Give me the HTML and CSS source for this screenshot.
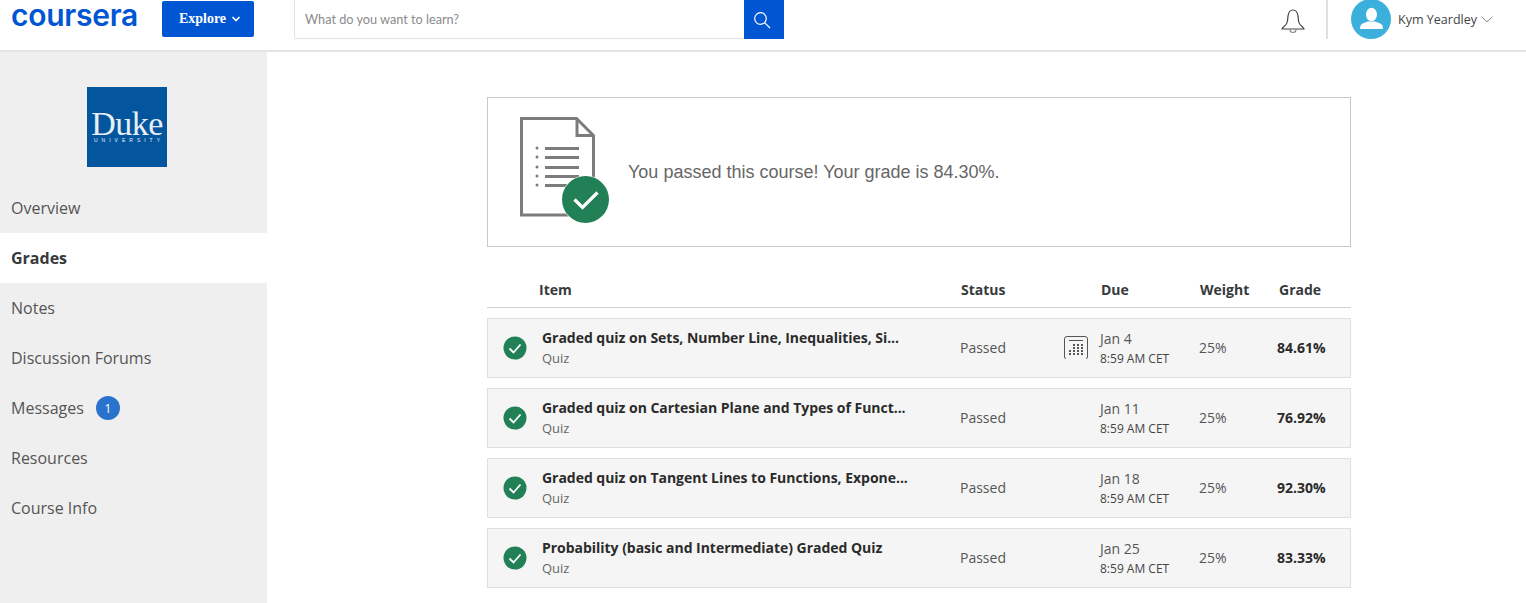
FILE: index.html
```html
<!DOCTYPE html>
<html lang="en">

<head>
	<meta charset="UTF-8">
	<meta name="viewport" content="width=device-width, initial-scale=1.0">
	<title>Grades | Coursera</title>
	<link rel="stylesheet" href="styles.css">
</head>

<body>

	<header class="topbar">
		<div class="topbar__logo">coursera</div>
		<button class="topbar__explore">Explore
			<svg width="10" height="6" viewBox="0 0 10 6"><path d="M1.500 1 5 4.500 8.500 1" fill="none" stroke="#fff" stroke-width="1.600"/></svg>
		</button>
		<div class="search">
			<div class="search__input">What do you want to learn?</div>
			<div class="search__btn">
				<svg width="18" height="18" viewBox="0 0 18 18"><circle cx="7.500" cy="7.500" r="5.800" fill="none" stroke="#fff" stroke-width="1.200"/><path d="M11.800 11.800 17 17" stroke="#fff" stroke-width="1.200"/></svg>
			</div>
		</div>
		<div class="topbar__right">
			<svg class="bell" width="24" height="26" viewBox="0 0 24 26"><path d="M1 20c0-2 5-3 5.500-8l.5-5C7.500 3.500 9 1 12 1s4.500 2.500 5 6l.5 5c.5 5 5.500 6 5.500 8z" fill="none" stroke="#444" stroke-width="1.200"/><path d="M9 20.500a3 3 0 0 0 6 0" fill="none" stroke="#888" stroke-width="1.200"/></svg>
			<div class="topbar__divider"></div>
			<div class="avatar">
				<svg width="40" height="40" viewBox="0 0 40 40"><circle cx="20" cy="20" r="20" fill="#3cb0dc"/><ellipse cx="20.500" cy="15.500" rx="5.500" ry="6.800" fill="#fff"/><path d="M9 30c0-3.500 1-5 4-6l4-1.500h7l4 1.500c3 1 4 2.500 4 6z" fill="#fff"/></svg>
			</div>
			<span class="topbar__name">Kym Yeardley</span>
			<svg width="12" height="7" viewBox="0 0 12 7"><path d="M.5.700 6 5.800 11.500.700" fill="none" stroke="#888" stroke-width="1"/></svg>
		</div>
	</header>

	<div class="page">
		<aside class="sidebar">
			<div class="duke">
				<div class="duke__name">Duke</div>
				<div class="duke__sub">UNIVERSITY</div>
			</div>
			<nav class="sidebar__nav">
				<a class="nav__item">Overview</a>
				<a class="nav__item nav__item--active">Grades</a>
				<a class="nav__item">Notes</a>
				<a class="nav__item">Discussion Forums</a>
				<a class="nav__item">Messages <span class="nav__badge">1</span></a>
				<a class="nav__item">Resources</a>
				<a class="nav__item">Course Info</a>
			</nav>
		</aside>

		<main class="content">
			<section class="passed">
				<svg class="passed__icon" width="92" height="108" viewBox="0 0 92 108">
					<path d="M1.500 1.500h55l17 17V98H1.500z" fill="#fff" stroke="#7c7c7c" stroke-width="3"/>
					<path d="M57 2v16.500h16" fill="none" stroke="#7c7c7c" stroke-width="3"/>
					<g fill="#7c7c7c">
						<rect x="25" y="30" width="34" height="3"/>
						<rect x="25" y="39" width="34" height="3"/>
						<rect x="25" y="49" width="34" height="3"/>
						<rect x="25" y="58" width="34" height="3"/>
						<rect x="25" y="67" width="34" height="3"/>
						<circle cx="17" cy="31" r="1.500"/>
						<circle cx="17" cy="40" r="1.500"/>
						<circle cx="17" cy="50" r="1.500"/>
						<circle cx="17" cy="59" r="1.500"/>
						<circle cx="17" cy="68" r="1.500"/>
					</g>
					<circle cx="65.500" cy="82.500" r="24" fill="#fff"/>
					<circle cx="65.500" cy="82.500" r="23.500" fill="#218055"/>
					<path d="M54.500 82.500l8 8 15-15" fill="none" stroke="#fff" stroke-width="3.200"/>
				</svg>
				<p class="passed__text">You passed this course! Your grade is 84.30%.</p>
			</section>

			<div class="grades__head">
				<span class="cell-item">Item</span>
				<span class="cell-status">Status</span>
				<span class="cell-due">Due</span>
				<span class="cell-weight">Weight</span>
				<span class="cell-grade">Grade</span>
			</div>

			<div class="grades__row">
				<svg class="check" width="24" height="24" viewBox="0 0 24 24"><circle cx="12" cy="12" r="11.500" fill="#218055"/><path d="M6.500 12.500l4 4 7-8" fill="none" stroke="#fff" stroke-width="1.800"/></svg>
				<div class="row__item">
					<div class="row__title">Graded quiz on Sets, Number Line, Inequalities, Si...</div>
					<div class="row__type">Quiz</div>
				</div>
				<div class="row__status">Passed</div>
				<div class="row__cal">
					<svg width="24" height="24" viewBox="0 0 24 24">
						<path d="M2 22.500a1.500 1.500 0 0 1-1.500-1.500V3A2.500 2.500 0 0 1 3 .5h18A2.500 2.500 0 0 1 23.500 3v18a1.500 1.500 0 0 1-1.500 1.500M5 4.500h14" fill="none" stroke="#555" stroke-width="1"/>
						<g fill="#555">
							<rect x="9" y="8" width="2" height="2"/><rect x="13" y="8" width="2" height="2"/><rect x="17" y="8" width="2" height="2"/>
							<rect x="9" y="11" width="2" height="2"/><rect x="13" y="11" width="2" height="2"/><rect x="17" y="11" width="2" height="2"/>
							<rect x="5" y="14" width="2" height="2"/><rect x="9" y="14" width="2" height="2"/><rect x="13" y="14" width="2" height="2"/><rect x="17" y="14" width="2" height="2"/>
							<rect x="5" y="17" width="2" height="2"/><rect x="9" y="17" width="2" height="2"/><rect x="13" y="17" width="2" height="2"/><rect x="17" y="17" width="2" height="2"/>
						</g>
					</svg>
				</div>
				<div class="row__due"><div class="due__date">Jan 4</div><div class="due__time">8:59 AM CET</div></div>
				<div class="row__weight">25%</div>
				<div class="row__grade">84.61%</div>
			</div>

			<div class="grades__row">
				<svg class="check" width="24" height="24" viewBox="0 0 24 24"><circle cx="12" cy="12" r="11.500" fill="#218055"/><path d="M6.500 12.500l4 4 7-8" fill="none" stroke="#fff" stroke-width="1.800"/></svg>
				<div class="row__item">
					<div class="row__title">Graded quiz on Cartesian Plane and Types of Funct...</div>
					<div class="row__type">Quiz</div>
				</div>
				<div class="row__status">Passed</div>
				<div class="row__cal"></div>
				<div class="row__due"><div class="due__date">Jan 11</div><div class="due__time">8:59 AM CET</div></div>
				<div class="row__weight">25%</div>
				<div class="row__grade">76.92%</div>
			</div>

			<div class="grades__row">
				<svg class="check" width="24" height="24" viewBox="0 0 24 24"><circle cx="12" cy="12" r="11.500" fill="#218055"/><path d="M6.500 12.500l4 4 7-8" fill="none" stroke="#fff" stroke-width="1.800"/></svg>
				<div class="row__item">
					<div class="row__title">Graded quiz on Tangent Lines to Functions, Expone...</div>
					<div class="row__type">Quiz</div>
				</div>
				<div class="row__status">Passed</div>
				<div class="row__cal"></div>
				<div class="row__due"><div class="due__date">Jan 18</div><div class="due__time">8:59 AM CET</div></div>
				<div class="row__weight">25%</div>
				<div class="row__grade">92.30%</div>
			</div>

			<div class="grades__row">
				<svg class="check" width="24" height="24" viewBox="0 0 24 24"><circle cx="12" cy="12" r="11.500" fill="#218055"/><path d="M6.500 12.500l4 4 7-8" fill="none" stroke="#fff" stroke-width="1.800"/></svg>
				<div class="row__item">
					<div class="row__title">Probability (basic and Intermediate) Graded Quiz</div>
					<div class="row__type">Quiz</div>
				</div>
				<div class="row__status">Passed</div>
				<div class="row__cal"></div>
				<div class="row__due"><div class="due__date">Jan 25</div><div class="due__time">8:59 AM CET</div></div>
				<div class="row__weight">25%</div>
				<div class="row__grade">83.33%</div>
			</div>
		</main>
	</div>

</body>

</html>
```

FILE: styles.css
```css
* {
	box-sizing: border-box;
}

html,
body {
	margin: 0;
	height: 603px;
	overflow: hidden;
	background: #fff;
	font-family: "Open Sans", sans-serif;
	color: #373a3c;
}

.topbar {
	display: flex;
	align-items: flex-start;
	height: 52px;
	border-bottom: 2px solid #e5e5e5;
	padding-left: 11px;
}

.topbar__logo {
	width: 128px;
	height: 36px;
	font-family: "Inter", sans-serif;
	font-size: 30px;
	font-weight: 600;
	line-height: 31px;
	letter-spacing: -.25px;
	color: #0056d2;
}

.topbar__explore {
	display: flex;
	align-items: center;
	justify-content: center;
	gap: 5px;
	width: 92px;
	height: 36px;
	margin: 1px 0 0 23px;
	padding: 0 0 0 4px;
	border: 0;
	border-radius: 2px;
	background: #0056d2;
	color: #fff;
	font-family: "Liberation Serif", serif;
	font-size: 14px;
	font-weight: bold;
}

.search {
	display: flex;
	width: 490px;
	height: 39px;
	margin-left: 40px;
}

.search__input {
	flex: 1;
	padding-left: 10px;
	border: 1px solid #e1e1e1;
	border-width: 0 0 1px 1px;
	border-radius: 0 0 0 2px;
	font-family: "Lato", sans-serif;
	font-size: 12.700px;
	line-height: 38px;
	color: #8b8b8b;
}

.search__btn {
	display: flex;
	align-items: center;
	justify-content: center;
	width: 40px;
	padding-right: 4px;
	background: #0056d2;
}

.topbar__right {
	display: flex;
	align-items: center;
	height: 39px;
	margin-left: auto;
	padding-right: 33px;
}

.bell {
	margin: 4px 21px 0 0;
}

.topbar__divider {
	width: 2px;
	height: 39px;
	margin-right: 23px;
	background: #e0e0e0;
}

.avatar {
	width: 40px;
	height: 40px;
	margin: -1px 7px 0 0;
}

.topbar__name {
	margin-right: 4px;
	font-size: 12.500px;
	color: #444;
}

.page {
	display: flex;
	height: 551px;
}

.sidebar {
	width: 267px;
	padding-top: 35px;
	background: #efefef;
}

.duke {
	width: 80px;
	height: 80px;
	margin: 0 0 16px 87px;
	padding-top: 23px;
	background: #03569e;
	color: #e8eef5;
	font-family: "Liberation Serif", serif;
	text-align: center;
}

.duke__name {
	font-size: 34px;
	line-height: 28px;
	letter-spacing: -.5px;
}

.duke__sub {
	padding-left: 4px;
	font-family: "Liberation Sans", sans-serif;
	font-size: 5px;
	line-height: 5px;
	letter-spacing: 4px;
}

.nav__item {
	display: flex;
	align-items: center;
	height: 50px;
	padding-left: 11px;
	font-size: 16px;
	color: #555;
}

.nav__item--active {
	background: #fff;
	font-weight: 700;
	color: #373a3c;
}

.nav__badge {
	display: flex;
	align-items: center;
	justify-content: center;
	width: 24px;
	height: 24px;
	margin-left: 12px;
	border-radius: 50%;
	background: #2a73cc;
	color: #fff;
	font-size: 12px;
}

.content {
	width: 864px;
	margin-left: 220px;
	padding-top: 45px;
}

.passed {
	display: flex;
	align-items: center;
	height: 150px;
	padding-left: 32px;
	border: 1px solid #c8c8c8;
}

.passed__icon {
	margin-top: -2px;
}

.passed__text {
	margin: 0 0 0 16px;
	font-family: "Liberation Sans", sans-serif;
	font-size: 18px;
	color: #666;
}

.grades__head {
	display: flex;
	align-items: center;
	height: 32px;
	margin: 29px 0 10px;
	border-bottom: 1px solid #d0d0d0;
	padding-bottom: 5px;
	font-size: 14px;
	font-weight: 700;
	color: #373a3c;
}

.cell-item {
	width: 422px;
	padding-left: 52px;
}

.cell-status {
	width: 141px;
	margin-left: 52px;
}

.cell-due {
	width: 99px;
	margin-left: -1px;
}

.cell-weight {
	width: 79px;
}

.grades__row {
	display: flex;
	align-items: center;
	height: 60px;
	margin-bottom: 10px;
	padding-left: 15px;
	border: 1px solid #dfdfdf;
	background: #f5f5f5;
	font-size: 14px;
	color: #555;
}

.check {
	flex: none;
}

.row__item {
	width: 418px;
	margin-left: 15px;
}

.row__title {
	font-weight: 700;
	line-height: 20px;
	letter-spacing: -.03px;
	color: #2b2b2b;
	white-space: nowrap;
}

.row__type {
	font-size: 13px;
	line-height: 20px;
	color: #666;
}

.row__status {
	width: 104px;
	padding-bottom: 2px;
}

.row__cal {
	display: flex;
	width: 36px;
}

.row__due {
	width: 99px;
	padding-top: 2px;
}

.due__date {
	line-height: 20px;
}

.due__time {
	font-size: 12px;
	line-height: 20px;
	color: #444;
}

.row__weight {
	width: 78px;
	padding-bottom: 2px;
}

.row__grade {
	padding-bottom: 2px;
	font-weight: 700;
	color: #2b2b2b;
}
```
